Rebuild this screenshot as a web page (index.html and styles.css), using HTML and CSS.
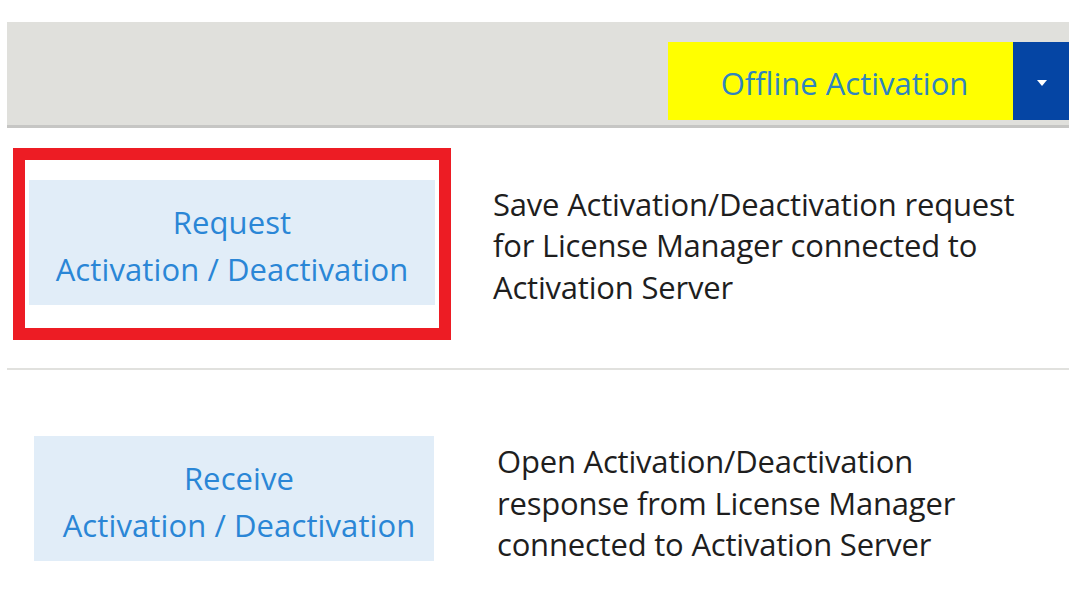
FILE: index.html
```html
<!DOCTYPE html>
<html lang="en">
<head>
    <meta charset="UTF-8">
    <title>Offline Activation</title>
    <link rel="stylesheet" href="styles.css">
</head>
<body>
    <div class="page">
        <div class="toolbar">
            <button class="split-main">Offline Activation</button>
            <button class="split-arrow" aria-label="More">
                <svg width="12" height="8" viewBox="0 0 12 8"><path d="M1 1h10L6 7z" fill="#fff"/></svg>
            </button>
        </div>

        <div class="row row-first">
            <div class="highlight">
                <button class="action">Request<br>Activation / Deactivation</button>
            </div>
            <p class="desc">Save Activation/Deactivation request<br>for License Manager connected to<br>Activation Server</p>
        </div>

        <hr class="divider">

        <div class="row row-second">
            <button class="action action-narrow">Receive<br>Activation / Deactivation</button>
            <p class="desc">Open Activation/Deactivation<br>response from License Manager<br>connected to Activation Server</p>
        </div>
    </div>
</body>
</html>
```

FILE: styles.css
```css
body {
    margin: 0;
    background-color: #fff;
    font-family: 'Open Sans', 'Noto Sans', sans-serif;
}

.page {
    width: 1062px;
    margin: 22px 0 0 7px;
}

.toolbar {
    display: flex;
    justify-content: flex-end;
    align-items: flex-start;
    height: 83px;
    padding-top: 20px;
    background-color: #e0e0dc;
    border-bottom: 3px solid #c6c6c4;
}

.toolbar button {
    border: none;
    margin: 0;
    cursor: pointer;
    height: 78px;
}

.split-main {
    width: 345px;
    background-color: #ffff00;
    color: #2f84bf;
    font-family: inherit;
    font-size: 31px;
    padding: 4px 0 0 8px;
}

.split-arrow {
    width: 56px;
    background-color: #0545a4;
    display: flex;
    align-items: center;
    justify-content: center;
    padding: 4px 0 0 2px;
}

.row {
    display: flex;
    align-items: center;
}

.row-first {
    padding: 20px 0 0 6px;
}

.highlight {
    border: 12px solid #ed1c24;
    padding: 20px 4px 23px;
}

.action {
    display: block;
    border: none;
    background-color: #e1edf8;
    color: #2a86d6;
    font-family: inherit;
    font-size: 31px;
    line-height: 47px;
    letter-spacing: 0.1px;
    width: 406px;
    height: 125px;
    padding: 6px 0 0;
    cursor: pointer;
}

.action-narrow {
    width: 400px;
    padding-left: 10px;
}

.desc {
    margin: 0;
    font-size: 31px;
    line-height: 41.5px;
    color: #1e1e1e;
    letter-spacing: -0.2px;
}

.row-first .desc {
    margin: 0 0 -2px 42px;
    padding-top: 2px;
}

.divider {
    border: none;
    border-top: 2px solid #e1e1de;
    margin: 28px 0 0;
}

.row-second {
    padding: 66px 0 0 27px;
}

.row-second .desc {
    margin: 0 0 -5px 63px;
    padding-top: 5px;
}
```
